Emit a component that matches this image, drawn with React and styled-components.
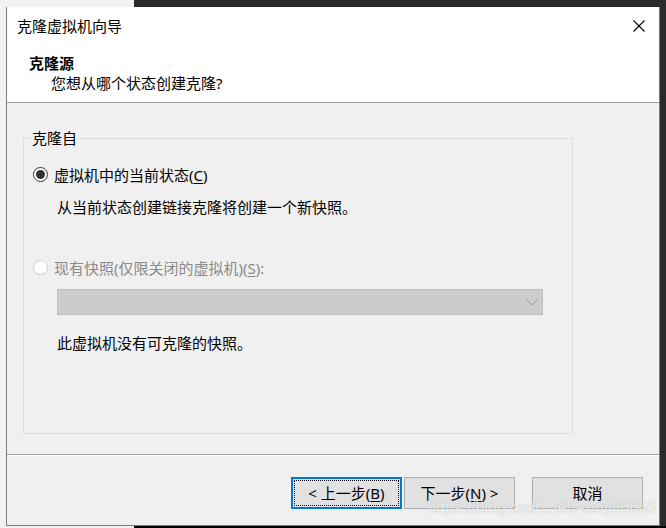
import styled, { createGlobalStyle } from "styled-components"

const GlobalStyle = createGlobalStyle`
  html, body {
    margin: 0;
    padding: 0;
  }
  body {
    width: 666px;
    height: 528px;
    overflow: hidden;
    font-family: "Noto Sans", "Noto Sans CJK SC", sans-serif;
    font-size: 15px;
    color: #000;
  }
`

const Desktop = styled.div`
  width: 666px;
  height: 528px;
  padding: 7px 0 0 6px;
  box-sizing: border-box;
  background:
    linear-gradient(to right, #f2f2f2 0 134px, transparent 134px),
    linear-gradient(to bottom, #2b2b2b 0 526px, #000 526px);
`

const Window = styled.div`
  position: relative;
  width: 654px;
  height: 519px;
  box-sizing: border-box;
  border: 1px solid #7a7a7a;
  border-top: none;
  background: #f0f0f0;
  display: flex;
  flex-direction: column;
`

const Top = styled.div`
  background: #fff;
  border-bottom: 1px solid #a0a0a0;
`

const TitleBar = styled.div`
  height: 37px;
  display: flex;
  align-items: center;
  justify-content: space-between;
  padding: 0 14px 0 10px;
  line-height: 20px;
`

const CloseButton = styled.div`
  width: 12px;
  height: 12px;
  display: flex;
`

const Header = styled.div`
  padding: 9px 0 9px 22px;
  line-height: 20px;
`

const HeaderTitle = styled.div`
  font-weight: bold;
`

const HeaderSub = styled.div`
  padding-left: 22px;
`

const Body = styled.div`
  flex: 1;
  padding: 25px 0 0 16px;
`

const Group = styled.fieldset`
  margin: 0;
  width: 539px;
  height: 304px;
  box-sizing: content-box;
  padding: 0 0 0 9px;
  border: 1px solid #dcdcdc;
`

const Legend = styled.legend`
  padding: 0 2px;
  margin-left: -3px;
  line-height: 20px;
`

const RadioRow = styled.label`
  display: flex;
  align-items: center;
  gap: 6px;
  height: 20px;
  margin-top: ${p => p.$top}px;
  color: ${p => (p.$disabled ? "#8a8a8a" : "#000")};
`

const RadioCircle = styled.span`
  width: 15px;
  height: 15px;
  box-sizing: border-box;
  border-radius: 50%;
  border: 1px solid ${p => (p.$disabled ? "#cfcfcf" : "#333")};
  background: #fff;
  display: flex;
  align-items: center;
  justify-content: center;
  &::after {
    content: "";
    width: 9px;
    height: 9px;
    border-radius: 50%;
    background: ${p => (p.$checked ? "#333" : "transparent")};
  }
`

const Hint = styled.div`
  margin: ${p => p.$top}px 0 0 24px;
  line-height: 20px;
`

const Combo = styled.div`
  margin: 12px 0 0 24px;
  width: 486px;
  height: 26px;
  box-sizing: border-box;
  background: #cccccc;
  border: 1px solid #bfbfbf;
  display: flex;
  align-items: center;
  justify-content: flex-end;
  padding-right: 4px;
`

const Key = styled.span`
  text-decoration: underline;
  text-underline-offset: 2px;
`

const Footer = styled.div`
  height: 71px;
  box-sizing: border-box;
  border-top: 1px solid #a0a0a0;
  box-shadow: inset 0 1px 0 #fff;
  display: flex;
  justify-content: flex-end;
  align-items: flex-start;
  padding: 22px 16px 0 0;
`

const ButtonGroup = styled.div`
  display: flex;
  gap: 2px;
  margin-right: 17px;
`

const Button = styled.button`
  position: relative;
  width: 111px;
  height: 32px;
  box-sizing: border-box;
  font: inherit;
  line-height: 20px;
  color: #000;
  background: #e1e1e1;
  border: ${p => (p.$default ? "2px solid #0078d7" : "1px solid #adadad")};
  padding: 0;
  &::after {
    content: "";
    display: ${p => (p.$default ? "block" : "none")};
    position: absolute;
    inset: 1px;
    border: 1px dotted #000;
  }
`

/* csdn watermark burnt into the screenshot, sits over the buttons */
const Watermark = styled.div`
  position: absolute;
  right: 3px;
  bottom: 8px;
  font-family: "Liberation Sans", Arial, sans-serif;
  font-size: 16px;
  line-height: 18px;
  color: rgba(255, 255, 255, 0.8);
  text-shadow: 0 0 1px rgba(0, 0, 0, 0.3);
  pointer-events: none;
`

const App = () => {
  return (
    <>
      <GlobalStyle />
      <Desktop>
        <Window>
          <Top>
            <TitleBar>
              <span>克隆虚拟机向导</span>
              <CloseButton>
                <svg width="12" height="12" viewBox="0 0 12 12">
                  <path d="M0.5 0.5 L11.5 11.5 M11.5 0.5 L0.5 11.5" stroke="#000" strokeWidth="1.1" fill="none" />
                </svg>
              </CloseButton>
            </TitleBar>
            <Header>
              <HeaderTitle>克隆源</HeaderTitle>
              <HeaderSub>您想从哪个状态创建克隆?</HeaderSub>
            </Header>
          </Top>
          <Body>
            <Group>
              <Legend>克隆自</Legend>
              <RadioRow $top={16}>
                <RadioCircle $checked />
                <span>虚拟机中的当前状态(<Key>C</Key>)</span>
              </RadioRow>
              <Hint $top={13}>从当前状态创建链接克隆将创建一个新快照。</Hint>
              <RadioRow $top={40} $disabled>
                <RadioCircle $disabled />
                <span>现有快照(仅限关闭的虚拟机)(<Key>S</Key>):</span>
              </RadioRow>
              <Combo>
                <svg width="12" height="7" viewBox="0 0 12 7">
                  <path d="M0.5 0.5 L6 6 L11.5 0.5" stroke="#9c9c9c" strokeWidth="1" fill="none" />
                </svg>
              </Combo>
              <Hint $top={18}>此虚拟机没有可克隆的快照。</Hint>
            </Group>
          </Body>
          <Footer>
            <ButtonGroup>
              <Button $default>&lt; 上一步(<Key>B</Key>)</Button>
              <Button>下一步(<Key>N</Key>) &gt;</Button>
            </ButtonGroup>
            <Button>取消</Button>
          </Footer>
          <Watermark>https://blog.csdn.net/Andy86666</Watermark>
        </Window>
      </Desktop>
    </>
  )
}

export default App
